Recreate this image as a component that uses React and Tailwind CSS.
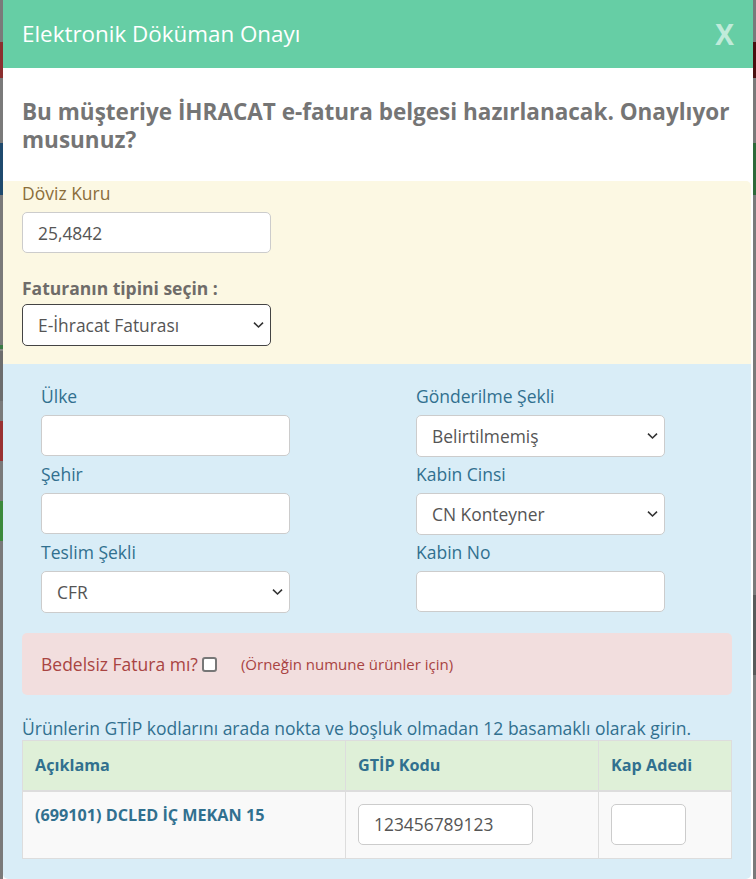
import React from 'react';

function Chevron() {
  return (
    <svg width="11" height="7" viewBox="0 0 11 7" className="pointer-events-none absolute right-[7px] top-1/2 -translate-y-1/2">
      <path d="M1 1.2l4.5 4.3L10 1.2" fill="none" stroke="#333" strokeWidth="1.6" />
    </svg>
  );
}

function TextInput({ value = '', className = '' }) {
  return (
    <input
      defaultValue={value}
      className={`h-[41px] rounded-[5px] border border-[#ccc] bg-white px-[15px] text-[17.4px] text-[#555] outline-none ${className}`}
    />
  );
}

function Select({ value, dark }) {
  return (
    <div className="relative w-[249px]">
      <select
        defaultValue={value}
        className={`h-[42px] w-full appearance-none rounded-[5px] border bg-white px-[15px] text-[17.4px] text-[#555] outline-none ${dark ? 'border-[#444]' : 'border-[#ccc]'}`}
      >
        <option>{value}</option>
      </select>
      <Chevron />
    </div>
  );
}

function Field({ label, children }) {
  return (
    <div className="flex flex-col">
      <label className="mb-[7px] text-[17.5px] leading-6 text-[#31708f]">{label}</label>
      {children}
    </div>
  );
}

function Strip({ bands }) {
  return (
    <div className="flex w-[3px] shrink-0 flex-col bg-[#7a7a7a]">
      {bands.map((b, i) => (
        <div key={i} style={{ height: b[0], background: b[1] }} />
      ))}
    </div>
  );
}

export default function App() {
  return (
    <div className="flex min-h-[879px] w-[756px] overflow-hidden bg-[#7a7a7a] font-['Open_Sans',sans-serif]">
      <Strip bands={[[42, '#7a7a7a'], [36, '#8b2f2f'], [65, '#7a7a7a'], [52, '#1f4a6e'], [150, '#7a7a7a'], [4, '#3a7a44'], [2, '#888'], [50, '#6d6d6d'], [20, '#7a7a7a'], [40, '#9a3232'], [40, '#7a7a7a'], [40, '#3c8a3c']]} />
      <div className="flex w-[750px] flex-col bg-white">
        <div className="flex h-[68px] items-center justify-between bg-[#66cea5] pl-[19px] pr-[19px]">
          <h2 className="text-[22.4px] text-white">Elektronik Döküman Onayı</h2>
          <button className="text-[28px] font-bold leading-none text-white/60">X</button>
        </div>

        <div className="px-[19px] pb-[28px] pt-[30px]">
          <h3 className="text-[22.5px] font-bold leading-[27.5px] text-[#757575]">
            Bu müşteriye İHRACAT e-fatura belgesi hazırlanacak. Onaylıyor musunuz?
          </h3>
        </div>

        <div className="mr-[2px] rounded-tr-[5px] bg-[#fcf8e3] px-[19px] pb-[18px]">
          <label className="block text-[17.5px] leading-6 text-[#8a6d3b]">Döviz Kuru</label>
          <TextInput value="25,4842" className="mt-[7px] w-[249px]" />
          <div className="mt-[23px] mb-[4px] text-[17.5px] font-bold leading-6 text-[#6f6c69]">Faturanın tipini seçin :</div>
          <Select value="E-İhracat Faturası" dark />
        </div>

        <div className="mr-[2px] flex-1 rounded-b-[5px] bg-[#d9edf7] px-[19px] pb-[19px] pt-[20px]">
          <div className="grid grid-cols-[375px_1fr] gap-y-[5px] pl-[19px]">
            <Field label="Ülke"><TextInput className="w-[249px]" /></Field>
            <Field label="Gönderilme Şekli"><Select value="Belirtilmemiş" /></Field>
            <Field label="Şehir"><TextInput className="w-[249px]" /></Field>
            <Field label="Kabin Cinsi"><Select value="CN Konteyner" /></Field>
            <Field label="Teslim Şekli"><Select value="CFR" /></Field>
            <Field label="Kabin No"><TextInput className="w-[249px]" /></Field>
          </div>

          <div className="mt-[20px] flex h-[62px] items-center rounded-[5px] bg-[#f2dede] px-[19px] text-[#a94442]">
            <span className="text-[17.5px]">Bedelsiz Fatura mı?</span>
            <span className="ml-[4px] inline-block h-[15px] w-[15px] rounded-[3px] border-2 border-[#777] bg-white" />
            <span className="ml-[24px] text-[15px]">(Örneğin numune ürünler için)</span>
          </div>

          <p className="mt-[21px] text-[17.5px] leading-6 text-[#31708f]">
            Ürünlerin GTİP kodlarını arada nokta ve boşluk olmadan 12 basamaklı olarak girin.
          </p>

          <table className="w-full border-collapse border border-[#ddd] text-[#31708f]">
            <thead>
              <tr className="h-[50px] bg-[#dff0d8] text-left text-[16.2px] font-bold">
                <th className="w-[323px] border border-b-2 border-[#ddd] px-[12px]">Açıklama</th>
                <th className="w-[253px] border border-b-2 border-[#ddd] px-[12px]">GTİP Kodu</th>
                <th className="border border-b-2 border-[#ddd] px-[12px]">Kap Adedi</th>
              </tr>
            </thead>
            <tbody>
              <tr className="bg-[#f9f9f9]">
                <td className="border border-[#ddd] px-[12px] pb-[13px] pt-[11px] align-top text-[16.2px] font-bold leading-6">(699101) DCLED İÇ MEKAN 15</td>
                <td className="border border-[#ddd] px-[12px] pb-[13px] pt-[12px] align-top">
                  <TextInput value="123456789123" className="block w-[175px]" />
                </td>
                <td className="border border-[#ddd] px-[12px] pb-[13px] pt-[12px] align-top">
                  <TextInput className="block w-[75px]" />
                </td>
              </tr>
            </tbody>
          </table>
        </div>
      </div>
      <Strip bands={[[42, '#7a7a7a'], [36, '#4a1010'], [65, '#7a7a7a'], [52, '#2f6a3a'], [400, '#7a7a7a'], [80, '#5a5a5a']]} />
    </div>
  );
}
